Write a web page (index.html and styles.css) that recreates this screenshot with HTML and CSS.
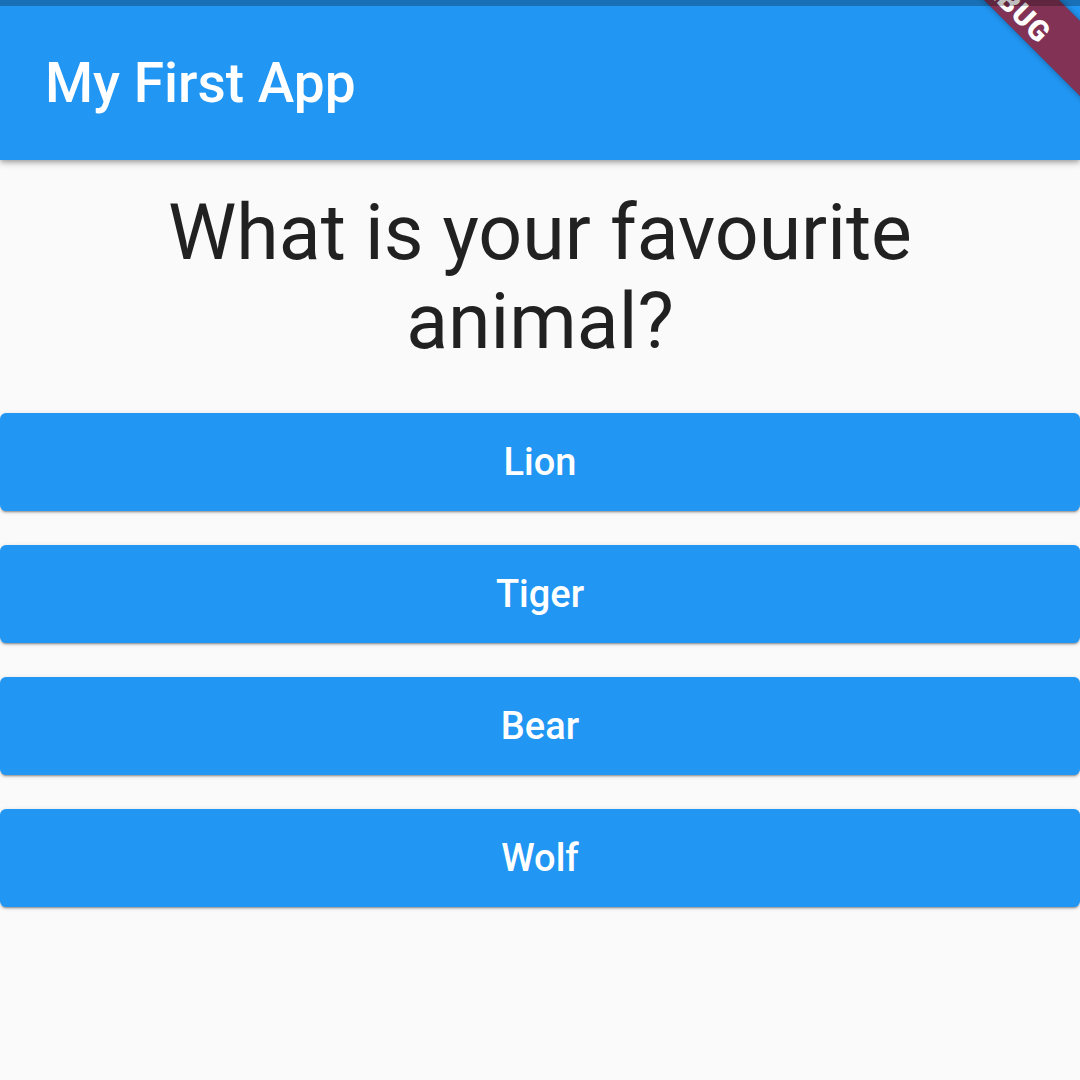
FILE: index.html
```html
<!DOCTYPE html>
<html lang="en">
<head>
<meta charset="utf-8">
<title>My First App</title>
<link rel="stylesheet" href="styles.css">
</head>
<body>
<div class="screen">
  <header class="appbar">
    <h1 class="appbar-title">My First App</h1>
  </header>
  <main class="content">
    <p class="question">What is your favourite animal?</p>
    <div class="answers">
      <div class="answer"><button class="answer-btn">Lion</button></div>
      <div class="answer"><button class="answer-btn">Tiger</button></div>
      <div class="answer"><button class="answer-btn">Bear</button></div>
      <div class="answer"><button class="answer-btn">Wolf</button></div>
    </div>
  </main>
  <div class="debug-banner"><span class="debug-text">DEBUG</span></div>
  <div class="statusbar"></div>
</div>
</body>
</html>
```
FILE: styles.css
```css
html, body {
  margin: 0;
  padding: 0;
}
body {
  width: 1080px;
  height: 1080px;
  overflow: hidden;
  background: #fafafa;
  font-family: Roboto, "Liberation Sans", sans-serif;
}
.screen {
  position: relative;
  width: 1080px;
  height: 1080px;
  overflow: hidden;
  background: #fafafa;
  display: flex;
  flex-direction: column;
}
.appbar {
  position: relative;
  z-index: 2;
  height: 154px;
  padding: 6px 0 0 45px;
  background: #2196f3;
  display: flex;
  align-items: center;
  box-shadow: 0 2px 4px -1px rgba(0,0,0,0.2), 0 4px 5px 0 rgba(0,0,0,0.14), 0 1px 10px 0 rgba(0,0,0,0.12);
}
.appbar-title {
  margin: 0;
  color: #ffffff;
  font-size: 55px;
  font-weight: 500;
  line-height: 1;
  letter-spacing: 0;
}
.content {
  display: flex;
  flex-direction: column;
}
.question {
  margin: 29px;
  color: rgba(0,0,0,0.87);
  font-size: 77px;
  font-weight: 400;
  line-height: 89px;
  text-align: center;
}
.answers {
  display: flex;
  flex-direction: column;
}
.answer {
  padding: 17px 0;
}
.answer-btn {
  display: block;
  width: 100%;
  height: 98px;
  border: none;
  border-radius: 6px;
  background: #2196f3;
  color: #ffffff;
  font-family: Roboto, "Liberation Sans", sans-serif;
  font-size: 38px;
  font-weight: 500;
  padding: 0;
  box-shadow: 0 3px 1px -2px rgba(0,0,0,0.2), 0 2px 2px 0 rgba(0,0,0,0.14), 0 1px 5px 0 rgba(0,0,0,0.12);
}
.debug-banner {
  position: absolute;
  z-index: 5;
  left: 868px;
  top: -30px;
  width: 300px;
  height: 53px;
  transform: rotate(45deg);
  background: rgba(150,28,50,0.82);
  box-shadow: 0 0 6px rgba(0,0,0,0.35);
  display: flex;
  justify-content: center;
  align-items: center;
}
.debug-text {
  color: #ffffff;
  font-family: Roboto, "Liberation Sans", sans-serif;
  font-weight: 900;
  font-size: 29px;
  line-height: 1;
  letter-spacing: 1px;
  transform: translateY(10px);
}
.statusbar {
  position: absolute;
  z-index: 6;
  left: 0;
  top: 0;
  width: 1080px;
  height: 6px;
  background: rgba(0,0,0,0.25);
}
```
